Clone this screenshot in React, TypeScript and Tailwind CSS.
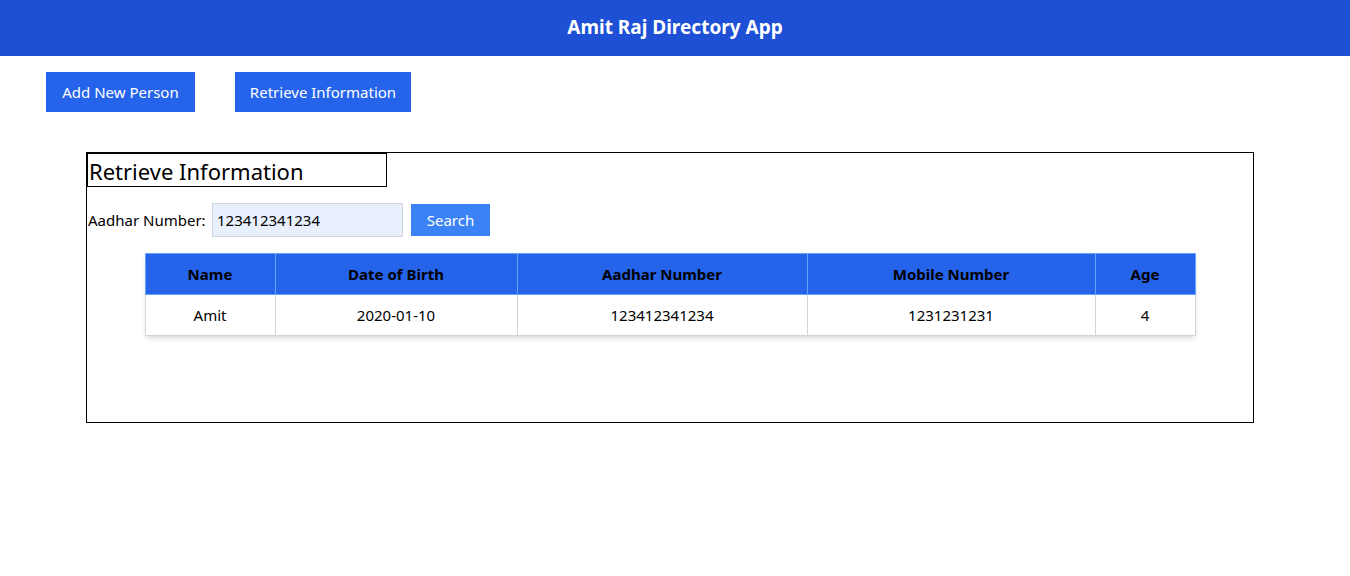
import React from "react";

export default function App() {
  const font = { fontFamily: '"Noto Sans", "Open Sans", sans-serif' };
  return (
    <div className="min-h-[576px] bg-white text-black" style={font}>
      <header className="h-[56px] bg-[#1e50d6] flex items-center justify-center pb-[1px]">
        <h1 className="text-[19px] font-bold text-white">Amit Raj Directory App</h1>
      </header>
      <div className="flex gap-[40px] pl-[46px] pt-[16px]">
        <button className="h-[40px] w-[149px] bg-[#2563eb] text-white text-[15px]">Add New Person</button>
        <button className="h-[40px] w-[176px] bg-[#2563eb] text-white text-[15px]">Retrieve Information</button>
      </div>
      <div className="ml-[86px] mt-[40px] w-[1168px] h-[271px] border border-black">
        <h2 className="w-[300px] h-[34px] border border-black text-[22px] leading-[34px] pl-[1px]">Retrieve Information</h2>
        <div className="flex items-center mt-[16px] pl-[1px]">
          <label className="text-[15px] w-[124px] shrink-0">Aadhar Number:</label>
          <input
            readOnly
            value="123412341234"
            className="w-[191px] h-[34px] bg-[#e8f0fe] border border-[#d1d5db] px-[4px] text-[15px] outline-none"
          />
          <button className="ml-[8px] w-[79px] h-[32px] bg-[#3b82f6] text-white text-[15px]">Search</button>
        </div>
        <table className="mx-auto mt-[16px] w-[1050px] table-fixed border-collapse shadow-md text-[15px]">
          <thead>
            <tr className="bg-[#2563eb] h-[41px]">
              <th className="w-[130px] border border-[#60a5fa] font-bold">Name</th>
              <th className="w-[242px] border border-[#60a5fa] font-bold">Date of Birth</th>
              <th className="w-[290px] border border-[#60a5fa] font-bold">Aadhar Number</th>
              <th className="w-[288px] border border-[#60a5fa] font-bold">Mobile Number</th>
              <th className="w-[100px] border border-[#60a5fa] font-bold">Age</th>
            </tr>
          </thead>
          <tbody>
            <tr className="h-[41px] text-center">
              <td className="border border-[#d1d5db]">Amit</td>
              <td className="border border-[#d1d5db]">2020-01-10</td>
              <td className="border border-[#d1d5db]">123412341234</td>
              <td className="border border-[#d1d5db]">1231231231</td>
              <td className="border border-[#d1d5db]">4</td>
            </tr>
          </tbody>
        </table>
      </div>
    </div>
  );
}
